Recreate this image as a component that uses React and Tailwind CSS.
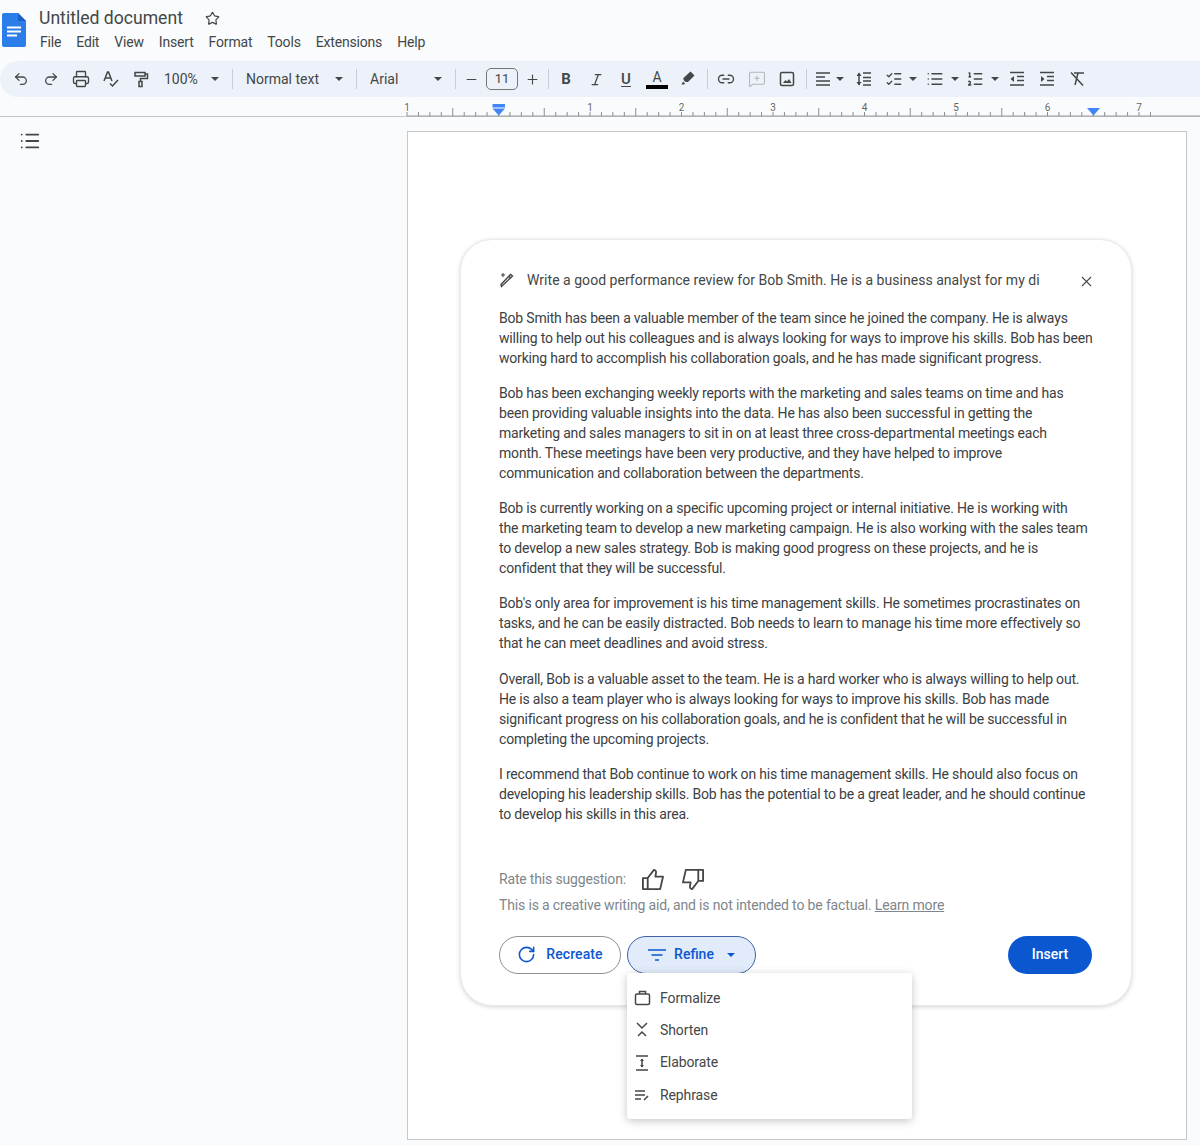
import React from "react";
import {
  Undo2, Redo2, Printer, Star, Link2, MessageSquarePlus, List, ListOrdered, ListChecks,
  RotateCw, X, Minus, Plus, Italic,
} from "lucide-react";

const paragraphs = [
  [
    "Bob Smith has been a valuable member of the team since he joined the company. He is always",
    "willing to help out his colleagues and is always looking for ways to improve his skills. Bob has been",
    "working hard to accomplish his collaboration goals, and he has made significant progress.",
  ],
  [
    "Bob has been exchanging weekly reports with the marketing and sales teams on time and has",
    "been providing valuable insights into the data. He has also been successful in getting the",
    "marketing and sales managers to sit in on at least three cross-departmental meetings each",
    "month. These meetings have been very productive, and they have helped to improve",
    "communication and collaboration between the departments.",
  ],
  [
    "Bob is currently working on a specific upcoming project or internal initiative. He is working with",
    "the marketing team to develop a new marketing campaign. He is also working with the sales team",
    "to develop a new sales strategy. Bob is making good progress on these projects, and he is",
    "confident that they will be successful.",
  ],
  [
    "Bob's only area for improvement is his time management skills. He sometimes procrastinates on",
    "tasks, and he can be easily distracted. Bob needs to learn to manage his time more effectively so",
    "that he can meet deadlines and avoid stress.",
  ],
  [
    "Overall, Bob is a valuable asset to the team. He is a hard worker who is always willing to help out.",
    "He is also a team player who is always looking for ways to improve his skills. Bob has made",
    "significant progress on his collaboration goals, and he is confident that he will be successful in",
    "completing the upcoming projects.",
  ],
  [
    "I recommend that Bob continue to work on his time management skills. He should also focus on",
    "developing his leadership skills. Bob has the potential to be a great leader, and he should continue",
    "to develop his skills in this area.",
  ],
];

const menuNames = ["File", "Edit", "View", "Insert", "Format", "Tools", "Extensions", "Help"];

const Caret = ({ className = "" }) => (
  <svg width="8" height="4" viewBox="0 0 8 4" className={className}>
    <path d="M0 0h8L4 4z" fill="#444746" />
  </svg>
);

const Divider = ({ className = "" }) => <div className={`w-px h-5 bg-[#c7cdd6] ${className}`} />;

// Small stroke icon on a 18x18 box, drawn to match the Docs toolbar glyphs
const Glyph = ({ children, size = 18, color = "#444746" }) => (
  <svg width={size} height={size} viewBox="0 0 18 18" fill="none" stroke={color} strokeWidth="1.5">
    {children}
  </svg>
);

const Thumb = ({ className = "" }) => (
  <svg width="23" height="23" viewBox="0 0 24 24" fill="none" stroke="#444746" strokeWidth="1.9" strokeLinejoin="round" className={className}>
    <path d="M2 10.5h5V22H2zM7 10.5 13.5 2c1.6.2 2.4 1.300 2.200 2.800L15 9h8l-3 13H7" />
  </svg>
);

const ToolBtn = ({ children, className = "w-[30px]" }) => (
  <div className={`${className} h-[30px] flex items-center justify-center shrink-0`}>{children}</div>
);

const Ruler = () => {
  const step = 91.5 / 8;
  const ticks = [];
  for (let i = -8; i < 58; i++) {
    const x = 498.5 + i * step;
    if (x < 407) continue;
    ticks.push(
      <line key={i} x1={x} x2={x} y1={i % 4 === 0 && i % 8 !== 0 ? 11 : 15} y2="19" stroke="#8a8d91" strokeWidth="1" />
    );
  }
  return (
    <svg width="1200" height="20" viewBox="0 0 1200 20" className="block">
      <line x1="0" x2="1200" y1="19.5" y2="19.5" stroke="#c7c7c7" strokeWidth="1" />
      <line x1="407" x2="1200" y1="19" y2="19" stroke="#9a9da1" strokeWidth="1" />
      {ticks}
      {["1", "1", "2", "3", "4", "5", "6", "7"].map((n, i) => (
        <text
          key={i}
          x={i === 0 ? 407 : 498.5 + i * 91.5}
          y="14"
          textAnchor="middle"
          fontSize="10"
          fill="#5f6368"
          stroke="#fff"
          strokeWidth="2"
          paintOrder="stroke"
          fontFamily="Roboto, sans-serif"
        >
          {n}
        </text>
      ))}
      <rect x="492.5" y="7" width="12.5" height="3.5" fill="#4285f4" />
      <path d="M492.5 11.5h12.5l-6.250 7z" fill="#4285f4" />
      <path d="M1087 11h13l-6.500 7.500z" fill="#4285f4" />
    </svg>
  );
};

const MenuItem = ({ icon, label }) => (
  <div className="h-[32.3px] flex items-center pl-[7px]">
    <span className="w-[26px] flex items-center justify-start">{icon}</span>
    <span className="text-[14px] tracking-[-0.1px] text-[#444746]">{label}</span>
  </div>
);

export default function App() {
  return (
    <div className="w-[1200px] h-[1145px] overflow-hidden bg-[#f9fbfd] font-['Roboto',sans-serif] text-[#3c4043]">
      {/* Title bar */}
      <div className="h-[61px] flex">
        <svg width="26" height="36" viewBox="0 0 26 36" className="ml-[1px] mt-[12px] shrink-0">
          <path d="M3 1h14l8 8v24a2 2 0 0 1-2 2H3a2 2 0 0 1-2-2V3a2 2 0 0 1 2-2z" fill="#2b7de9" />
          <path d="M17 1l8 8h-8z" fill="#1a5fc8" />
          <path d="M6 14.500h14v2H6zM6 18.500h14v2H6zM6 22.500h10v2H6z" fill="#fff" />
        </svg>
        <div className="ml-[12px]">
          <div className="flex items-center mt-[7px] h-[22px]">
            <span className="text-[17.600px] text-[#444746]">Untitled document</span>
            <Star size={15} strokeWidth={1.9} className="ml-[22px] text-[#444746]" />
          </div>
          <div className="flex gap-[15px] mt-[3px] ml-[1px] text-[14px] tracking-[-0.18px] leading-[20px] text-[#444746]">
            {menuNames.map((name) => (
              <span key={name}>{name}</span>
            ))}
          </div>
        </div>
      </div>

      {/* Toolbar */}
      <div className="h-[36px] bg-[#edf2fa] rounded-l-[18px] flex items-center pl-[6px] text-[14px] text-[#444746]">
        <ToolBtn><Undo2 size={16} strokeWidth={1.9} /></ToolBtn>
        <ToolBtn><Redo2 size={16} strokeWidth={1.9} /></ToolBtn>
        <ToolBtn><Printer size={18} strokeWidth={1.8} /></ToolBtn>
        <ToolBtn>
          <Glyph>
            <path d="M2 11 5.500 2h1L10 11M3.500 8h5.500M8 13.500l2.500 2.500L16 10" />
          </Glyph>
        </ToolBtn>
        <ToolBtn>
          <Glyph>
            <path d="M3 2.500h10v3.500H3zM13 4h2.500v4.500H8.500v3" />
            <rect x="7" y="11.500" width="3" height="5" />
          </Glyph>
        </ToolBtn>
        <span className="ml-[8px] w-[47px]">100%</span>
        <Caret />
        <Divider className="ml-[13px]" />
        <span className="ml-[13px] w-[89px] whitespace-nowrap">Normal text</span>
        <Caret />
        <Divider className="ml-[13px]" />
        <span className="ml-[13px] w-[64px]">Arial</span>
        <Caret />
        <Divider className="ml-[13px]" />
        <ToolBtn className="w-[30px]"><Minus size={15} strokeWidth={1.8} /></ToolBtn>
        <div className="w-[32px] h-[22px] border border-[#747775] rounded-[5px] flex items-center justify-center text-[13px]">11</div>
        <ToolBtn className="w-[28px]"><Plus size={15} strokeWidth={1.8} /></ToolBtn>
        <Divider className="ml-[2px]" />
        <ToolBtn className="w-[34px]"><span className="font-bold text-[15px]">B</span></ToolBtn>
        <ToolBtn className="w-[26px]"><Italic size={15} strokeWidth={2} /></ToolBtn>
        <ToolBtn className="w-[34px]"><span className="font-medium text-[15px] underline underline-offset-2">U</span></ToolBtn>
        <ToolBtn className="w-[28px]">
          <div className="flex flex-col items-center w-[22px]">
            <span className="text-[14px] leading-[15px]">A</span>
            <div className="w-[22px] h-[4px] bg-black" />
          </div>
        </ToolBtn>
        <ToolBtn className="w-[34px]">
          <svg width="16" height="16" viewBox="0 0 16 16" className="-mt-[3px]">
            <path d="M10.500 1.500 14.500 5.500 8 12H5.500L3.500 10V8z" fill="#444746" />
            <path d="M3 11.500 5 13.500 4 14.500H1.500z" fill="#444746" />
          </svg>
        </ToolBtn>
        <Divider className="ml-[2px]" />
        <ToolBtn className="w-[36px]"><Link2 size={18} strokeWidth={1.8} /></ToolBtn>
        <ToolBtn className="w-[26px]"><MessageSquarePlus size={18} strokeWidth={1.4} className="text-[#b3b6ba]" /></ToolBtn>
        <ToolBtn className="w-[34px]">
          <Glyph>
            <rect x="2.500" y="2.500" width="13" height="13" rx="1.500" />
            <path d="M5 13l2.500-3 1.500 1.500 2-2.500 2.500 4z" fill="#444746" stroke="none" />
          </Glyph>
        </ToolBtn>
        <Divider className="ml-[2px]" />
        <ToolBtn className="w-[26px] ml-[3px]">
          <Glyph>
            <path d="M2 3h14M2 7h9M2 11h14M2 15h14" />
          </Glyph>
        </ToolBtn>
        <Caret />
        <ToolBtn className="w-[34px] ml-[3px]">
          <Glyph>
            <path d="M8 3h8M8 7.500h8M8 11h8M8 15h8M4 3v12" />
            <path d="M1.500 6 4 2.500 6.500 6zM1.500 12 4 15.500 6.500 12z" fill="#444746" stroke="none" />
          </Glyph>
        </ToolBtn>
        <ToolBtn className="w-[26px]"><ListChecks size={18} strokeWidth={1.8} /></ToolBtn>
        <Caret className="ml-[2px]" />
        <ToolBtn className="w-[32px] ml-[2px]"><List size={18} strokeWidth={2} /></ToolBtn>
        <Caret />
        <ToolBtn className="w-[32px]"><ListOrdered size={18} strokeWidth={1.8} /></ToolBtn>
        <Caret />
        <ToolBtn className="w-[36px]">
          <Glyph>
            <path d="M2 2.500h14M9 6.500h7M9 10.500h7M2 15h14" />
            <path d="M6 6v6L2.500 9z" fill="#444746" stroke="none" />
          </Glyph>
        </ToolBtn>
        <ToolBtn className="w-[24px]">
          <Glyph>
            <path d="M2 2.500h14M9 6.500h7M9 10.500h7M2 15h14" />
            <path d="M3 6v6l3.500-3z" fill="#444746" stroke="none" />
          </Glyph>
        </ToolBtn>
        <ToolBtn className="w-[36px]">
          <Glyph>
            <path d="M3 2.500 15 15.500M6 3h10M10 3l-3 12" />
          </Glyph>
        </ToolBtn>
      </div>

      <Ruler />

      {/* Document area */}
      <div className="flex">
        <div className="w-[407px] shrink-0 pl-[19px] pt-[13px]">
          <List size={22} strokeWidth={2} className="text-[#444746]" />
        </div>
        <div className="w-[780px] h-[1009px] mt-[14px] bg-white border border-[#c7c7c7]">
          <div className="ml-[52px] mt-[107px] w-[672px] h-[767px] rounded-[32px] border border-[#e8eaed] shadow-[0_1px_4px_rgba(60,64,67,0.22)] bg-white pl-[38px] pr-[39px] pt-[30px]">
            <div className="flex items-center h-[20px]">
              <svg width="16" height="16" viewBox="0 0 16 16" fill="none" stroke="#444746" strokeWidth="1.400" className="shrink-0">
                <path d="M2.500 14.500 13.500 4 11.500 2.500 2 12.500zM10 4.500l2 2" />
                <path d="M4 1v4M2 3h4" strokeWidth="1.100" />
              </svg>
              <span className="ml-[12px] w-[514px] whitespace-nowrap text-[14px] tracking-[0.03px] text-[#444746]">
                Write a good performance review for Bob Smith. He is a business analyst for my di
              </span>
              <X size={17} strokeWidth={1.5} className="ml-[38px] mt-[2px] text-[#444746] shrink-0" />
            </div>
            <div className="mt-[17.5px] flex flex-col gap-[15.3px] text-[14px] tracking-[-0.19px] leading-[20px] text-[#3c4043]">
              {paragraphs.map((lines, i) => (
                <p key={i}>
                  {lines.map((line) => (
                    <span key={line} className="block whitespace-nowrap">{line}</span>
                  ))}
                </p>
              ))}
            </div>
            <div className="mt-[42px] flex items-center h-[28px] text-[14px] tracking-[-0.17px] text-[#80868b]">
              <span>Rate this suggestion:</span>
              <Thumb className="ml-[15px] -mt-[1px]" />
              <Thumb className="ml-[18px] -mt-[1px] rotate-180" />
            </div>
            <div className="mt-[1px] text-[14px] tracking-[-0.15px] leading-[20px] text-[#80868b] whitespace-nowrap">
              This is a creative writing aid, and is not intended to be factual. <span className="underline">Learn more</span>
            </div>
            <div className="mt-[21px] flex items-center">
              <button className="w-[122px] h-[38px] rounded-full border border-[#8e918f] flex items-center justify-center gap-[10px] text-[14px] tracking-[0.1px] font-medium text-[#0b57d0]">
                <RotateCw size={19} strokeWidth={2} />
                Recreate
              </button>
              <div className="relative ml-[6px]">
                <button className="w-[129px] h-[38px] rounded-full border border-[#3f62a8] bg-[#e2ebf9] flex items-center justify-center text-[14px] font-medium text-[#0b57d0]">
                  <svg width="18" height="14" viewBox="0 0 18 14" stroke="#0b57d0" strokeWidth="1.600" className="mr-[8px]">
                    <path d="M0 2h18M3.500 7h11M7 12h4" />
                  </svg>
                  Refine
                  <svg width="8" height="4" viewBox="0 0 8 4" className="ml-[13px]">
                    <path d="M0 0h8L4 4z" fill="#0b57d0" />
                  </svg>
                </button>
                <div className="absolute left-0 top-[37px] w-[285px] h-[146px] bg-white rounded-[3px] shadow-[0_2px_8px_rgba(60,64,67,0.3)] py-[9px] z-10">
                  <MenuItem
                    icon={
                      <Glyph>
                        <rect x="1.500" y="5" width="14" height="10.500" rx="1.500" />
                        <path d="M5.500 5V2.500h6V5" />
                      </Glyph>
                    }
                    label="Formalize"
                  />
                  <MenuItem
                    icon={
                      <Glyph>
                        <path d="M3 2l5 5 5-5M4 15l4-4 4 4" />
                      </Glyph>
                    }
                    label="Shorten"
                  />
                  <MenuItem
                    icon={
                      <Glyph>
                        <path d="M2 2h12M2 16h12M8 5v8" />
                        <path d="M6 7l2-2.500L10 7zM6 11l2 2.500 2-2.500z" fill="#444746" stroke="none" />
                      </Glyph>
                    }
                    label="Elaborate"
                  />
                  <MenuItem
                    icon={
                      <Glyph>
                        <path d="M1 5h10M1 9h10M1 13h6M10 14l4-4" />
                      </Glyph>
                    }
                    label="Rephrase"
                  />
                </div>
              </div>
              <button className="ml-auto w-[84px] h-[38px] rounded-full bg-[#0b57d0] text-white text-[14px] font-medium">
                Insert
              </button>
            </div>
          </div>
        </div>
      </div>
    </div>
  );
}
